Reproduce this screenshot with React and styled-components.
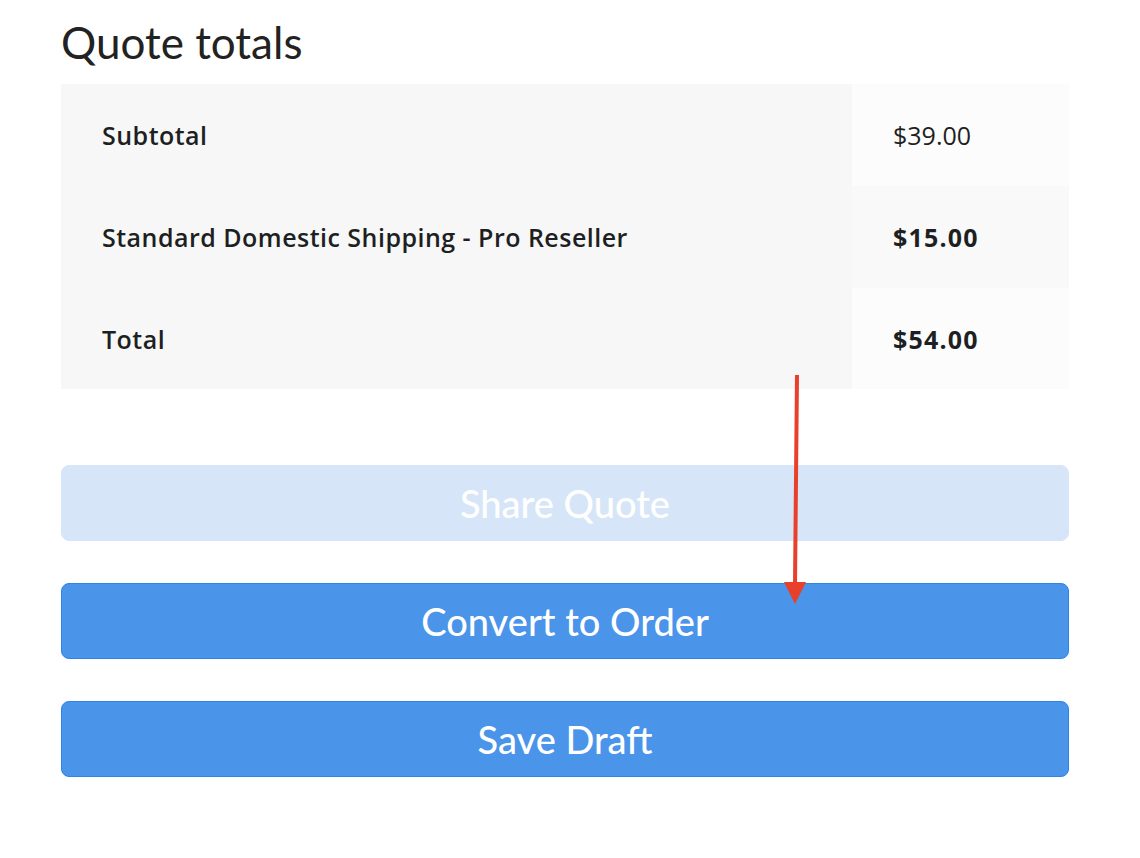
import styled, { createGlobalStyle } from "styled-components";

const Global = createGlobalStyle`
  html, body {
    margin: 0;
    background: #ffffff;
  }
  body {
    font-family: Lato, "Noto Sans", "Liberation Sans", sans-serif;
    color: #1d1f22;
  }
`;

const Page = styled.div`
  position: relative;
  width: 1008px;
  padding: 15px 0 0 61px;
`;

const Title = styled.h2`
  margin: 0 0 14px;
  font-size: 44px;
  font-weight: 400;
  line-height: 55px;
  color: #222;
`;

const Table = styled.table`
  width: 100%;
  border-collapse: collapse;
  table-layout: fixed;
  font-family: "Open Sans", Lato, sans-serif;
`;

const Row = styled.tr`
  height: ${(p) => p.$h}px;
`;

const Th = styled.th`
  width: 750px;
  padding: 0 0 0 41px;
  text-align: left;
  font-size: 25px;
  font-weight: 600;
  letter-spacing: 0.48px;
  background: #f7f7f7;
`;

const Td = styled.td`
  padding: 0 0 0 41px;
  font-size: 25px;
  font-weight: ${(p) => (p.$bold ? 700 : 400)};
  letter-spacing: ${(p) => (p.$bold ? "1.2px" : "0")};
  background: ${(p) => (p.$alt ? "#f9f9f9" : "#fcfcfc")};
`;

const Actions = styled.div`
  display: flex;
  flex-direction: column;
  gap: 42px;
  margin-top: 76px;
`;

const Button = styled.button`
  height: 76px;
  border-radius: 8px;
  border: 1px solid ${(p) => (p.disabled ? "#d6e6f8" : "#2c84e6")};
  background: ${(p) => (p.disabled ? "#d6e6f8" : "#4a94ea")};
  color: #fff;
  font-family: inherit;
  font-size: 38px;
  font-weight: 500;
  cursor: ${(p) => (p.disabled ? "default" : "pointer")};
`;

const Arrow = styled.svg`
  position: absolute;
  left: 780px;
  top: 370px;
`;

const rows = [
  { label: "Subtotal", value: "$39.00", h: 102 },
  { label: "Standard Domestic Shipping - Pro Reseller", value: "$15.00", bold: true, alt: true, h: 102 },
  { label: "Total", value: "$54.00", bold: true, h: 101 },
];

export default function App() {
  return (
    <>
      <Global />
      <Page>
        <Title>Quote totals</Title>
        <Table>
          <tbody>
            {rows.map((r) => (
              <Row key={r.label} $h={r.h}>
                <Th>{r.label}</Th>
                <Td $bold={r.bold} $alt={r.alt}>
                  {r.value}
                </Td>
              </Row>
            ))}
          </tbody>
        </Table>
        <Actions>
          <Button disabled>Share Quote</Button>
          <Button>Convert to Order</Button>
          <Button>Save Draft</Button>
        </Actions>
        <Arrow width="40" height="240" viewBox="0 0 40 240">
          <line x1="17" y1="5" x2="15" y2="215" stroke="#e8402a" strokeWidth="4" />
          <polygon points="4,212 26,212 15,234" fill="#e8402a" />
        </Arrow>
      </Page>
    </>
  );
}
